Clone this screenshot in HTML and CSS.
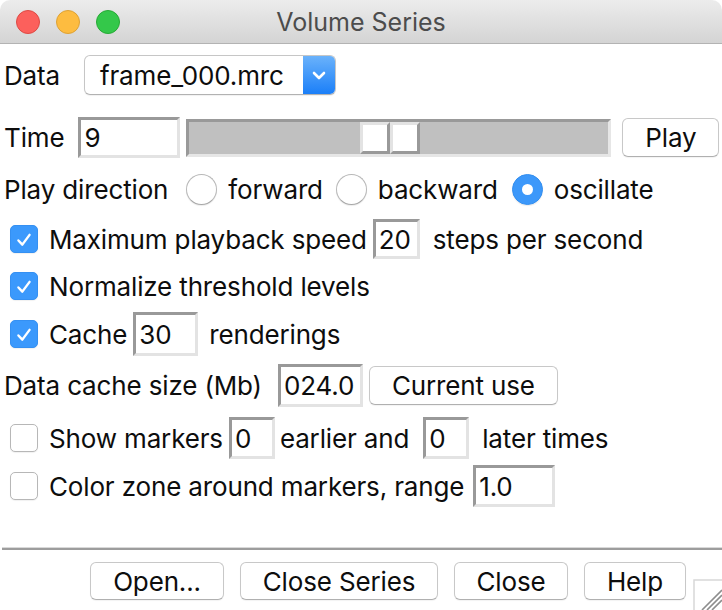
FILE: index.html
```html
<!DOCTYPE html>
<html>
<head>
<meta charset="utf-8">
<link rel="stylesheet" href="styles.css">
</head>
<body>
<div class="window">
  <div class="titlebar">
    <div class="lights">
      <span class="light red"></span>
      <span class="light yellow"></span>
      <span class="light green"></span>
    </div>
    <div class="title">Volume Series</div>
    <div></div>
  </div>

  <div class="content">
    <div class="row r-data">
      <span class="txt">Data</span>
      <div class="select">
        <span class="select-text">frame_000.mrc</span>
        <span class="select-arrow">
          <svg width="32" height="40" viewBox="0 0 32 40"><path d="M11 18 L16 23 L21 18" fill="none" stroke="#fff" stroke-width="2.6" stroke-linecap="round" stroke-linejoin="round"/></svg>
        </span>
      </div>
    </div>

    <div class="row r-time">
      <span class="txt">Time</span>
      <div class="entry w-time">9</div>
      <div class="slider">
        <div class="thumb"><span class="thumb-half"></span><span class="thumb-half"></span></div>
      </div>
      <div class="btn b-play">Play</div>
    </div>

    <div class="row r-dir">
      <span class="txt">Play direction</span>
      <span class="radio rd1"></span><span class="txt rlabel">forward</span>
      <span class="radio rd2"></span><span class="txt rlabel">backward</span>
      <span class="radio rd3 on"></span><span class="txt rlabel">oscillate</span>
    </div>

    <div class="row r-max">
      <span class="check on"><svg width="28" height="28" viewBox="0 0 28 28"><path d="M8 14.5 L12.2 19 L20 8.5" fill="none" stroke="#fff" stroke-width="2.6" stroke-linecap="round" stroke-linejoin="round"/></svg></span>
      <span class="txt clabel">Maximum playback speed</span>
      <div class="entry w-max">20</div>
      <span class="txt after">steps per second</span>
    </div>

    <div class="row r-norm">
      <span class="check on"><svg width="28" height="28" viewBox="0 0 28 28"><path d="M8 14.5 L12.2 19 L20 8.5" fill="none" stroke="#fff" stroke-width="2.6" stroke-linecap="round" stroke-linejoin="round"/></svg></span>
      <span class="txt clabel">Normalize threshold levels</span>
    </div>

    <div class="row r-cache">
      <span class="check on"><svg width="28" height="28" viewBox="0 0 28 28"><path d="M8 14.5 L12.2 19 L20 8.5" fill="none" stroke="#fff" stroke-width="2.6" stroke-linecap="round" stroke-linejoin="round"/></svg></span>
      <span class="txt clabel">Cache</span>
      <div class="entry w-cache">30</div>
      <span class="txt after-cache">renderings</span>
    </div>

    <div class="row r-dcs">
      <span class="txt">Data cache size (Mb)</span>
      <div class="entry w-dcs">024.0</div>
      <div class="btn b-current">Current use</div>
    </div>

    <div class="row r-show">
      <span class="check"></span>
      <span class="txt clabel">Show markers</span>
      <div class="entry w-small e-first">0</div>
      <span class="txt mid">earlier and</span>
      <div class="entry w-small e-second">0</div>
      <span class="txt after">later times</span>
    </div>

    <div class="row r-color">
      <span class="check"></span>
      <span class="txt clabel">Color zone around markers, range</span>
      <div class="entry w-range">1.0</div>
    </div>
  </div>

  <div class="separator"></div>

  <div class="buttons">
    <div class="btn b-open">Open...</div>
    <div class="btn b-closeseries">Close Series</div>
    <div class="btn b-close">Close</div>
    <div class="btn b-help">Help</div>
  </div>

  <div class="grip">
    <svg width="29" height="31" viewBox="0 0 29 31">
      <path d="M1 31 V1 H29" fill="none" stroke="#d8d8d8" stroke-width="1.5"/>
      <path d="M9 31 L29 11 M14 31 L29 16 M19 31 L29 21" stroke="#8e8e8e" stroke-width="1.6"/>
    </svg>
  </div>
</div>
</body>
</html>
```
FILE: styles.css
```css
html, body {
  margin: 0;
  padding: 0;
  background: #fff;
}

.window {
  position: relative;
  width: 722px;
  height: 610px;
  overflow: hidden;
  background: #fff;
  font-family: Inter, "Noto Sans", sans-serif;
  font-size: 26px;
  letter-spacing: -0.15px;
  color: #0d0d0d;
}

.titlebar {
  height: 43px;
  border-bottom: 1px solid #b3b3b3;
  background: linear-gradient(#ececec, #d4d4d4);
  border-radius: 10px 10px 0 0;
  display: grid;
  grid-template-columns: 1fr auto 1fr;
  align-items: center;
}

.lights {
  display: flex;
  gap: 16px;
  padding-left: 16px;
}

.light {
  width: 24px;
  height: 24px;
  border-radius: 50%;
  box-sizing: border-box;
}

.red { background: #fc605c; border: 1px solid #de4a44; }
.yellow { background: #fdbc40; border: 1px solid #dea234; }
.green { background: #34c84a; border: 1px solid #27aa35; }

.title {
  color: #4c4c4c;
  font-size: 25px;
  letter-spacing: 0;
}

.content {
  padding-left: 4px;
}

.row {
  display: flex;
  align-items: center;
}

.txt {
  white-space: nowrap;
}

.r-data { margin-top: 11px; height: 40px; gap: 24px; }
.r-time { margin-top: 22px; height: 41px; }
.r-dir { margin-top: 15px; height: 32px; }
.r-max { margin-top: 14px; height: 40px; }
.r-norm { margin-top: 12px; height: 30px; }
.r-cache { margin-top: 11px; height: 44px; }
.r-dcs { margin-top: 8px; height: 43px; }
.r-show { margin-top: 10px; height: 42px; }
.r-color { margin-top: 6px; height: 42px; }

/* dropdown */
.select {
  width: 252px;
  height: 40px;
  box-sizing: border-box;
  border: 1px solid #c6c6c6;
  border-bottom-color: #b2b2b2;
  border-radius: 6px;
  background: #fff;
  display: flex;
  align-items: stretch;
  overflow: hidden;
  box-shadow: 0 1px 1px rgba(0, 0, 0, 0.06);
}

.select-text {
  flex: 1;
  padding-left: 15px;
  display: flex;
  align-items: center;
}

.select-arrow {
  width: 32px;
  background: linear-gradient(#6ab2fb, #1b7ff8);
  display: flex;
  align-items: center;
  justify-content: center;
}

/* sunken entry */
.entry {
  height: 100%;
  box-sizing: border-box;
  border-style: solid;
  border-width: 3px;
  border-color: #999 #e3e3e3 #e3e3e3 #999;
  background: #fff;
  padding-left: 3px;
  display: flex;
  align-items: center;
  overflow: hidden;
  white-space: nowrap;
}

.w-time { width: 102px; margin-left: 14px; }
.w-max { width: 47px; margin-left: 6px; }
.w-cache { width: 65px; margin-left: 6px; }
.w-dcs { width: 85px; margin-left: 16px; }
.w-small { width: 46px; }
.e-first { margin-left: 6px; }
.e-second { margin-left: 14px; }
.w-range { width: 82px; margin-left: 9px; }

.after { margin-left: 13px; }
.after-cache { margin-left: 11px; }
.mid { margin-left: 5px; }

/* slider */
.slider {
  width: 425px;
  height: 38px;
  margin-left: 6px;
  box-sizing: border-box;
  border-style: solid;
  border-width: 3px;
  border-color: #999 #e6e6e6 #e6e6e6 #999;
  background: #c0c0c0;
  padding-left: 171px;
  display: flex;
}

.thumb {
  display: flex;
  height: 100%;
}

.thumb-half {
  width: 30px;
  box-sizing: border-box;
  border-style: solid;
  border-width: 3px;
  border-color: #e3e3e3 #999 #999 #e3e3e3;
  background: #fff;
}

/* buttons */
.btn {
  box-sizing: border-box;
  border: 1px solid #c8c8c8;
  border-bottom-color: #b0b0b0;
  border-radius: 6px;
  background: #fff;
  display: flex;
  align-items: center;
  justify-content: center;
  white-space: nowrap;
  box-shadow: 0 1px 1px rgba(0, 0, 0, 0.05);
}

.b-play { width: 97px; height: 39px; margin-left: 11px; }
.b-current { width: 189px; height: 39px; margin-left: 6px; }

/* radios */
.radio {
  width: 31px;
  height: 31px;
  box-sizing: border-box;
  border-radius: 50%;
  border: 1px solid #b8b8b8;
  border-bottom-color: #a8a8a8;
  background: #fff;
  box-shadow: 0 1px 1px rgba(0, 0, 0, 0.08);
  display: flex;
  align-items: center;
  justify-content: center;
}

.rd1 { margin-left: 18px; }
.rd2 { margin-left: 13px; }
.rd3 { margin-left: 14px; }

.rlabel { margin-left: 11px; }

.radio.on {
  background: #3c98fa;
  border-color: #348ff0;
}

.radio.on::after {
  content: "";
  width: 11px;
  height: 11px;
  border-radius: 50%;
  background: #fff;
}

/* checkboxes */
.check {
  width: 28px;
  height: 28px;
  box-sizing: border-box;
  border-radius: 5px;
  margin-left: 6px;
  border: 1px solid #b7b7b7;
  background: #fff;
  box-shadow: 0 1px 1px rgba(0, 0, 0, 0.06);
  display: flex;
}

.check.on {
  background: #3b99fc;
  border-color: #3590f2;
}

.clabel { margin-left: 11px; }

/* bottom */
.separator {
  margin-top: 40px;
  margin-left: 2px;
  height: 1px;
  background: #d9d9d9;
  border-bottom: 2px solid #9d9d9d;
}

.buttons {
  margin-top: 12px;
  padding-left: 90px;
  display: flex;
  gap: 16px;
}

.buttons .btn { height: 38px; }
.b-open { width: 134px; }
.b-closeseries { width: 198px; }
.b-close { width: 114px; }
.b-help { width: 102px; }

.grip {
  position: absolute;
  right: 0;
  bottom: 0;
  width: 29px;
  height: 31px;
}
```
